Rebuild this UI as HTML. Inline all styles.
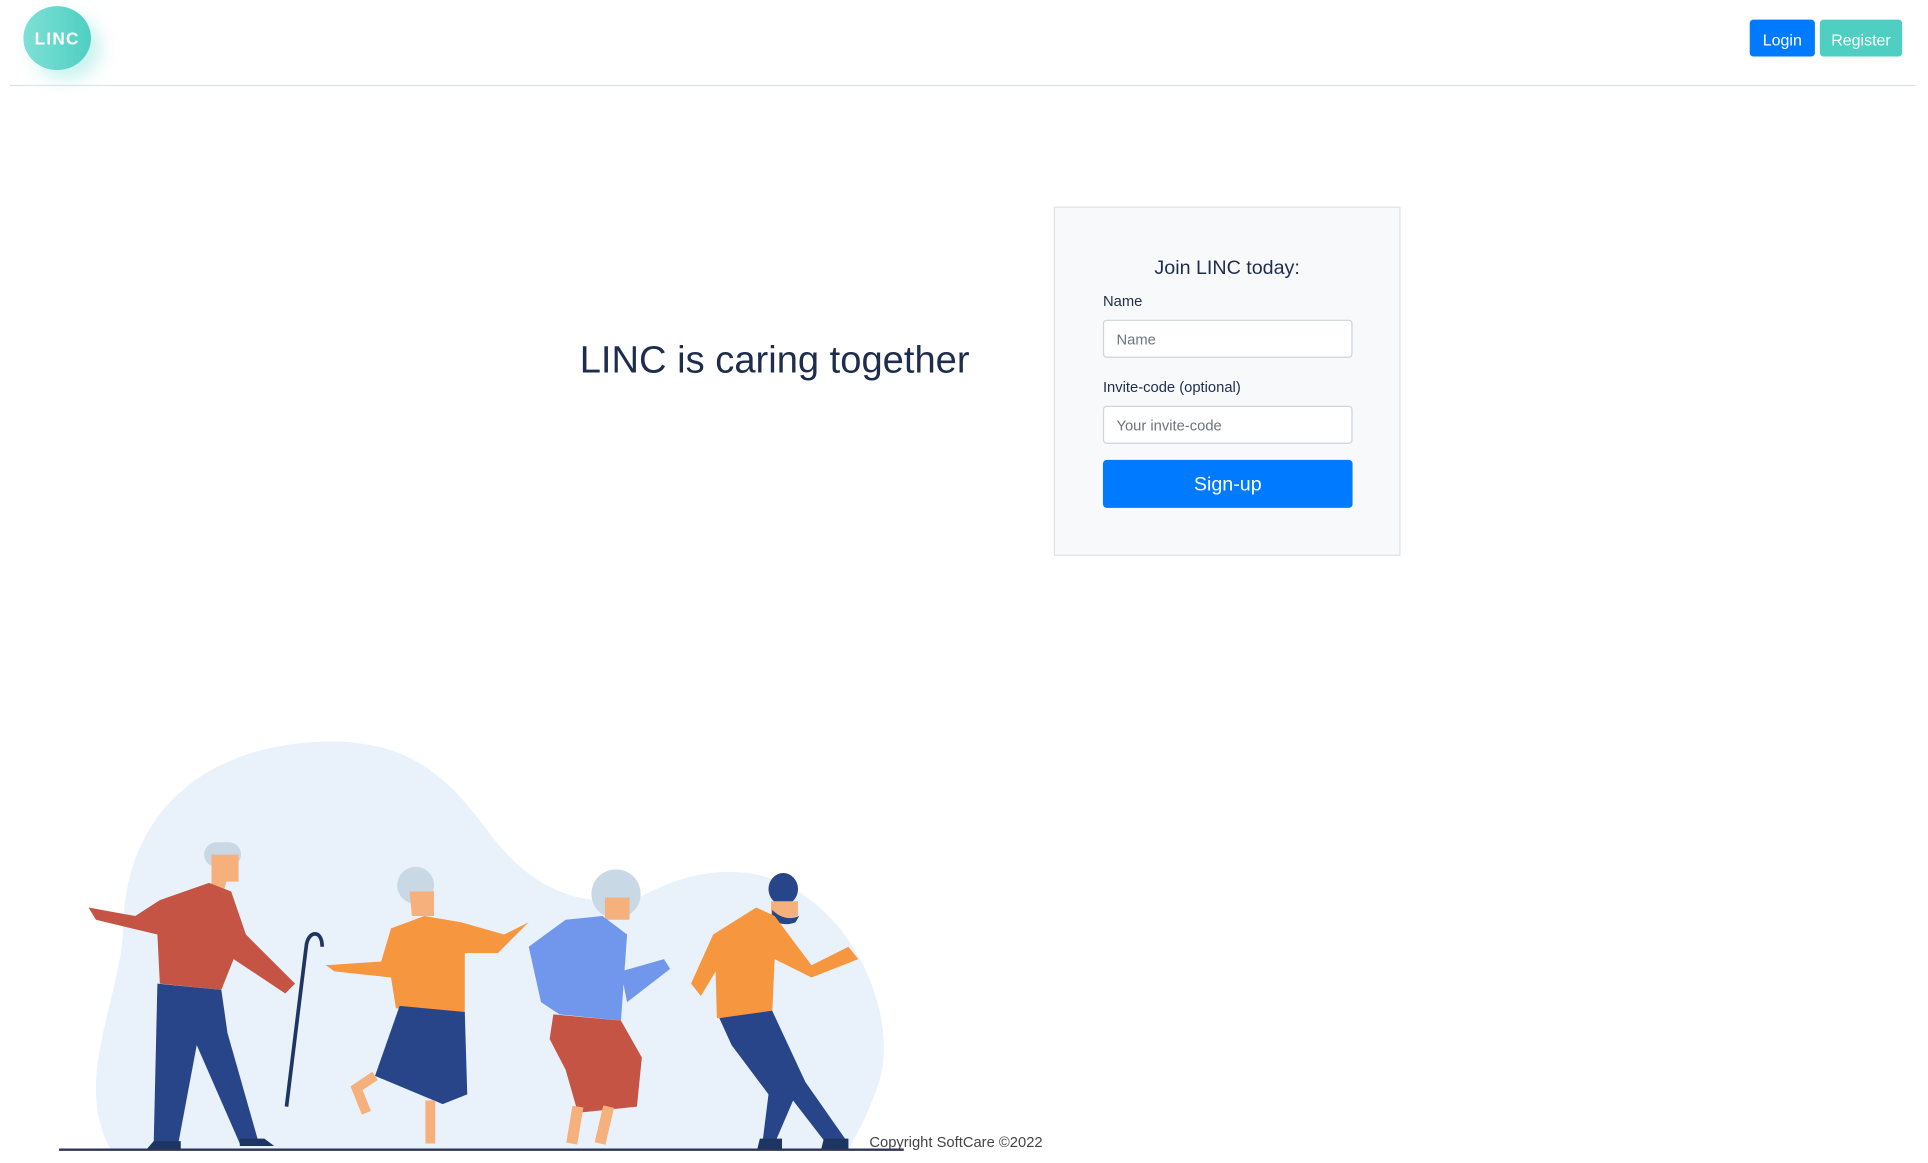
<!DOCTYPE html>
<html><head><meta charset="utf-8"><style>
html,body{margin:0;padding:0;background:#fff;overflow:hidden}
#w{position:absolute;left:0;top:0;width:1568px;height:946px;transform:scale(1.2296);transform-origin:0 0;font-family:"Liberation Sans",sans-serif;color:#212529}
.nav{position:absolute;left:8px;right:10px;top:69px;border-top:1px solid #dee2e6}
.logo{position:absolute;left:19px;top:5px;width:55px;height:52px;border-radius:50%;background:linear-gradient(90deg,#7ee0d6,#4fcfc2);box-shadow:8px 8px 14px rgba(100,220,210,.35);color:#fff;font-weight:bold;font-size:14px;letter-spacing:1px;text-align:center;line-height:52px}
.btn{position:absolute;top:16px;height:30px;line-height:33px;color:#fff;font-size:13px;text-align:center;border-radius:3px}
h1{position:absolute;left:440px;width:380px;top:275px;margin:0;font-weight:normal;font-size:31px;text-align:center;color:#1f2d4d}
.card{position:absolute;left:857px;top:168px;width:280px;height:282px;background:#f8f9fa;border:1px solid #dee2e6}
.t{position:absolute;left:0;right:0;top:41px;text-align:center;font-size:16px;color:#1f2d4d}
.lb{position:absolute;left:39px;font-size:12px;color:#1f2d4d}
.in{position:absolute;left:39px;width:201px;height:29px;background:#fff;border:1px solid #ced4da;border-radius:3px;font-size:12px;color:#6c757d;line-height:31px;text-indent:10px}
.sb{position:absolute;left:39px;top:205px;width:203px;height:39px;background:#007bff;border-radius:3px;color:#fff;font-size:16px;text-align:center;line-height:42px}
.cp{position:absolute;left:707px;top:922px;font-size:12px;color:#444}
</style></head><body><div id="w">
<div class="logo">LINC</div>
<div class="nav"></div>
<div class="btn" style="left:1423px;width:53px;background:#007bff">Login</div>
<div class="btn" style="left:1480px;width:67px;background:#4fcfc2">Register</div>
<h1>LINC is caring together</h1>
<div class="card">
<div class="t">Join LINC today:</div>
<div class="lb" style="top:69px">Name</div>
<div class="in" style="top:91px">Name</div>
<div class="lb" style="top:139px">Invite-code (optional)</div>
<div class="in" style="top:161px">Your invite-code</div>
<div class="sb">Sign-up</div>
</div>
<svg style="position:absolute;left:0;top:0" width="1568" height="946" viewBox="0 0 1568 946">
<path d="M90 935 C60 880 95 820 100 760 C100 650 180 603 270 603 C340 603 370 640 400 680 C430 720 470 740 520 730 C555 710 600 700 640 720 C700 750 730 830 715 880 C705 910 695 925 690 935 Z" fill="#e9f2fa"/>
<rect x="166" y="685" width="30" height="20" rx="10" fill="#c8d8e4"/>
<path d="M172 695 h22 v22 h-10 l-2 8 h-10z" fill="#f5b07c"/>
<path d="M130 732 L170 718 L188 725 L200 760 L240 800 L232 808 L190 780 L180 805 L130 800 L128 760 L78 748 L72 738 L110 745z" fill="#c55445"/>
<path d="M128 800 L180 805 L185 840 L210 928 L195 930 L160 850 L145 930 L125 930z" fill="#284589"/>
<path d="M125 928 h22 v7 h-28z M195 926 h20 l8 6 h-28z" fill="#1d3563"/>
<path d="M262 770 C262 755 250 757 249 770 L233 900" stroke="#1d3563" stroke-width="3" fill="none"/>
<ellipse cx="338" cy="720" rx="15" ry="15" fill="#c8d8e4"/>
<path d="M333 725 h20 v20 h-18z" fill="#f5b07c"/>
<path d="M318 755 L345 745 L375 750 L410 760 L430 750 L405 775 L378 775 L378 825 L322 820 L318 795 L272 790 L265 785 L310 782z" fill="#f6963f"/>
<path d="M325 818 L378 823 L380 890 L360 898 L305 875z" fill="#284589"/>
<path d="M305 875 L290 885 L298 905 M350 895 L350 930" stroke="#f5b07c" stroke-width="8" fill="none"/>
<ellipse cx="501" cy="727" rx="20" ry="20" fill="#c8d8e4"/>
<path d="M492 730 h20 v18 h-20z" fill="#f5b07c"/>
<path d="M460 748 L490 745 L510 760 L505 830 L455 825 L440 815 L430 770z M505 790 L540 780 L545 788 L510 815z" fill="#7097ec"/>
<path d="M450 825 L505 830 L522 860 L518 900 L470 905 L460 870 L447 845z" fill="#c55445"/>
<path d="M470 900 L465 930 M495 900 L488 930" stroke="#f5b07c" stroke-width="9" fill="none"/>
<ellipse cx="637" cy="723" rx="12" ry="13" fill="#284589"/>
<path d="M627 733 h22 v12 l-12 3 h-10z" fill="#f5b07c"/>
<path d="M628 740 q10 10 22 5 l-3 5 q-10 4 -19 -2z" fill="#284589"/>
<path d="M580 760 L615 738 L630 745 L660 785 L690 770 L698 780 L660 795 L630 780 L628 825 L583 828 L582 790 L570 810 L562 800z" fill="#f6963f"/>
<path d="M585 828 L628 822 L655 880 L690 930 L672 930 L645 895 L630 930 L620 930 L625 890 L595 850z" fill="#284589"/>
<path d="M618 926 h18 v8 h-20z M670 926 h20 v8 h-22z" fill="#1d3563"/>
<line x1="48" y1="935" x2="735" y2="935" stroke="#2c3556" stroke-width="2"/>
</svg>
<div class="cp">Copyright SoftCare ©2022</div>
</div></body></html>
